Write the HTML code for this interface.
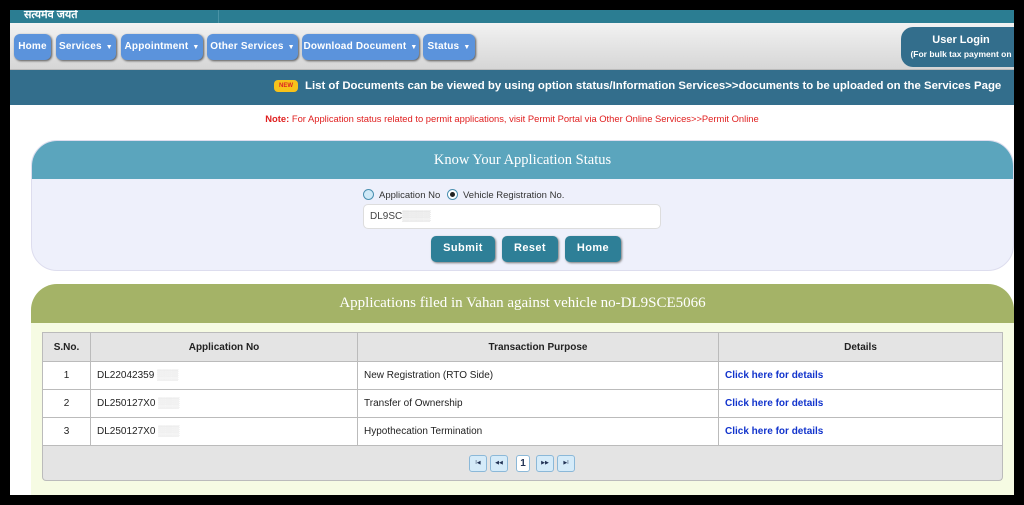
<!DOCTYPE html>
<html><head><meta charset="utf-8"><style>
*{box-sizing:border-box;margin:0;padding:0}
body{width:1024px;height:505px;background:#000;position:relative;overflow:hidden;font-family:"Liberation Sans",Arial,sans-serif}
#pg{position:absolute;left:10px;top:10px;width:1004px;height:485px;background:#fff;overflow:hidden}
.top{position:absolute;left:0;top:0;width:1004px;height:13px;background:#2b7d92}
.top span{position:absolute;left:14px;top:-3px;color:#fff;font-size:11px;font-weight:bold;font-family:"Liberation Sans","Noto Sans CJK SC",sans-serif}
.top .sep{position:absolute;left:208px;top:0;width:1px;height:13px;background:#4a93a6}
.nav{position:absolute;left:0;top:13px;width:1004px;height:47px;background:linear-gradient(#f2f2f2,#d6d6d6);border-bottom:1px solid #bbb}
.b{position:absolute;top:11px;height:26px;background:#5b93dc;border-radius:6px;color:#fff;font-size:10px;letter-spacing:.2px;font-weight:bold;line-height:25px;text-align:center;box-shadow:1px 1px 2px #555;white-space:nowrap}
.b i{font-style:normal;font-size:7px;margin-left:4px}
.login{position:absolute;left:891px;top:4px;width:120px;height:40px;background:#336e8c;border-radius:12px 0 0 12px;color:#fff;text-align:center;font-weight:bold}
.ban{position:absolute;left:0;top:60px;width:1004px;height:35px;background:#336e8c;color:#fff;font-size:11.4px;font-weight:bold;line-height:32px}
.new{position:absolute;left:264px;top:10px;width:24px;height:12px;background:#f7c21a;color:#d22;font-size:6px;line-height:12px;text-align:center;border-radius:4px}
.note{position:absolute;left:0;width:1004px;top:103px;text-align:center;font-size:9.4px;color:#e02020}
.p1{position:absolute;left:21px;top:130px;width:983px;height:131px;background:#eef0fb;border-radius:26px;border:1px solid #dde;overflow:hidden}
.h1{height:38px;background:#5ba5bd;color:#fff;font-family:"Liberation Serif",serif;font-size:14.5px;text-align:center;line-height:38px}
.p2{position:absolute;left:21px;top:274px;width:983px;height:230px;background:#f6fbe3;border-radius:26px 26px 0 0;overflow:hidden}
.h2{height:39px;background:#a4b367;color:#fff;font-family:"Liberation Serif",serif;font-size:15px;text-align:center;line-height:39px}
.rad{position:absolute;width:11px;height:11px;border-radius:50%;border:1px solid #4a8fb0;background:#cfe9f7}
.sm{position:absolute;font-size:9.5px;color:#333}
.inp{position:absolute;left:331px;top:63px;width:298px;height:25px;background:#fff;border:1px solid #ddd;border-radius:5px;font-size:10px;color:#444;line-height:23px;padding-left:6px}
.btn{position:absolute;top:95px;height:26px;background:#2e7f97;border-radius:5px;color:#fff;font-weight:bold;font-size:11px;letter-spacing:.4px;line-height:25px;text-align:center;box-shadow:1px 1px 2px #777}
table{position:absolute;left:11px;top:48px;width:961px;border-collapse:collapse;font-size:10px;color:#222;background:#fff}
td,th{border:1px solid #bbb;height:28px;padding-left:6px}
th{background:#e4e4e4;font-weight:bold;text-align:center;height:29px;padding:0}
td a{color:#1133cc;font-weight:bold}
.pager{position:absolute;left:11px;top:162px;width:961px;height:35px;background:#e4e4e4;border:1px solid #bbb;border-top:0;border-radius:0 0 4px 4px}
.pb{position:absolute;top:9px;width:18px;height:17px;background:#d5ebf9;border:1px solid #8bb8d8;border-radius:3px;font-size:5px;text-align:center;line-height:15px;color:#235}
</style></head><body><div id="pg">
<div class="top"><span>सत्यमेव जयते</span><div class="sep"></div></div>
<div class="nav">
<div class="b" style="left:4px;width:37px">Home</div>
<div class="b" style="left:46px;width:60px">Services<i>▼</i></div>
<div class="b" style="left:111px;width:82px">Appointment<i>▼</i></div>
<div class="b" style="left:197px;width:91px">Other Services<i>▼</i></div>
<div class="b" style="left:292px;width:117px">Download Document<i>▼</i></div>
<div class="b" style="left:413px;width:52px">Status<i>▼</i></div>
<div class="login"><div style="font-size:11px;margin-top:7px">User Login</div><div style="font-size:8.5px;margin-top:3px;white-space:nowrap">(For bulk tax payment on</div></div>
</div>
<div class="ban"><div class="new">NEW</div><span style="position:absolute;left:295px;white-space:nowrap">List of Documents can be viewed by using option status/Information Services&gt;&gt;documents to be uploaded on the Services Page</span></div>
<div class="note"><b>Note:</b> For Application status related to permit applications, visit Permit Portal via Other Online Services&gt;&gt;Permit Online</div>
<div class="p1"><div class="h1">Know Your Application Status</div>
<div class="rad" style="left:331px;top:48px"></div><div class="sm" style="left:347px;top:49px">Application No</div>
<div class="rad" style="left:415px;top:48px;background:#fff"><div style="width:5px;height:5px;background:#222;border-radius:50%;margin:2px"></div></div><div class="sm" style="left:431px;top:49px">Vehicle Registration No.</div>
<div class="inp">DL9SC<span style="color:#bbb">▒▒▒▒</span></div>
<div class="btn" style="left:399px;width:64px">Submit</div>
<div class="btn" style="left:470px;width:56px">Reset</div>
<div class="btn" style="left:533px;width:56px">Home</div>
</div>
<div class="p2"><div class="h2">Applications filed in Vahan against vehicle no-DL9SCE5066</div>
<table><tr><th style="width:48px">S.No.</th><th style="width:267px">Application No</th><th style="width:361px">Transaction Purpose</th><th>Details</th></tr>
<tr><td style="text-align:center;padding:0">1</td><td>DL22042359 <span style="color:#ccc">▒▒▒</span></td><td>New Registration (RTO Side)</td><td><a>Click here for details</a></td></tr>
<tr><td style="text-align:center;padding:0">2</td><td>DL250127X0 <span style="color:#ccc">▒▒▒</span></td><td>Transfer of Ownership</td><td><a>Click here for details</a></td></tr>
<tr><td style="text-align:center;padding:0">3</td><td>DL250127X0 <span style="color:#ccc">▒▒▒</span></td><td>Hypothecation Termination</td><td><a>Click here for details</a></td></tr></table>
<div class="pager">
<div class="pb" style="left:426px">I◀</div><div class="pb" style="left:447px">◀◀</div>
<div class="pb" style="left:473px;width:14px;background:#fff;font-size:10px;font-weight:bold">1</div>
<div class="pb" style="left:493px">▶▶</div><div class="pb" style="left:514px">▶I</div>
</div></div>
</div></body></html>
